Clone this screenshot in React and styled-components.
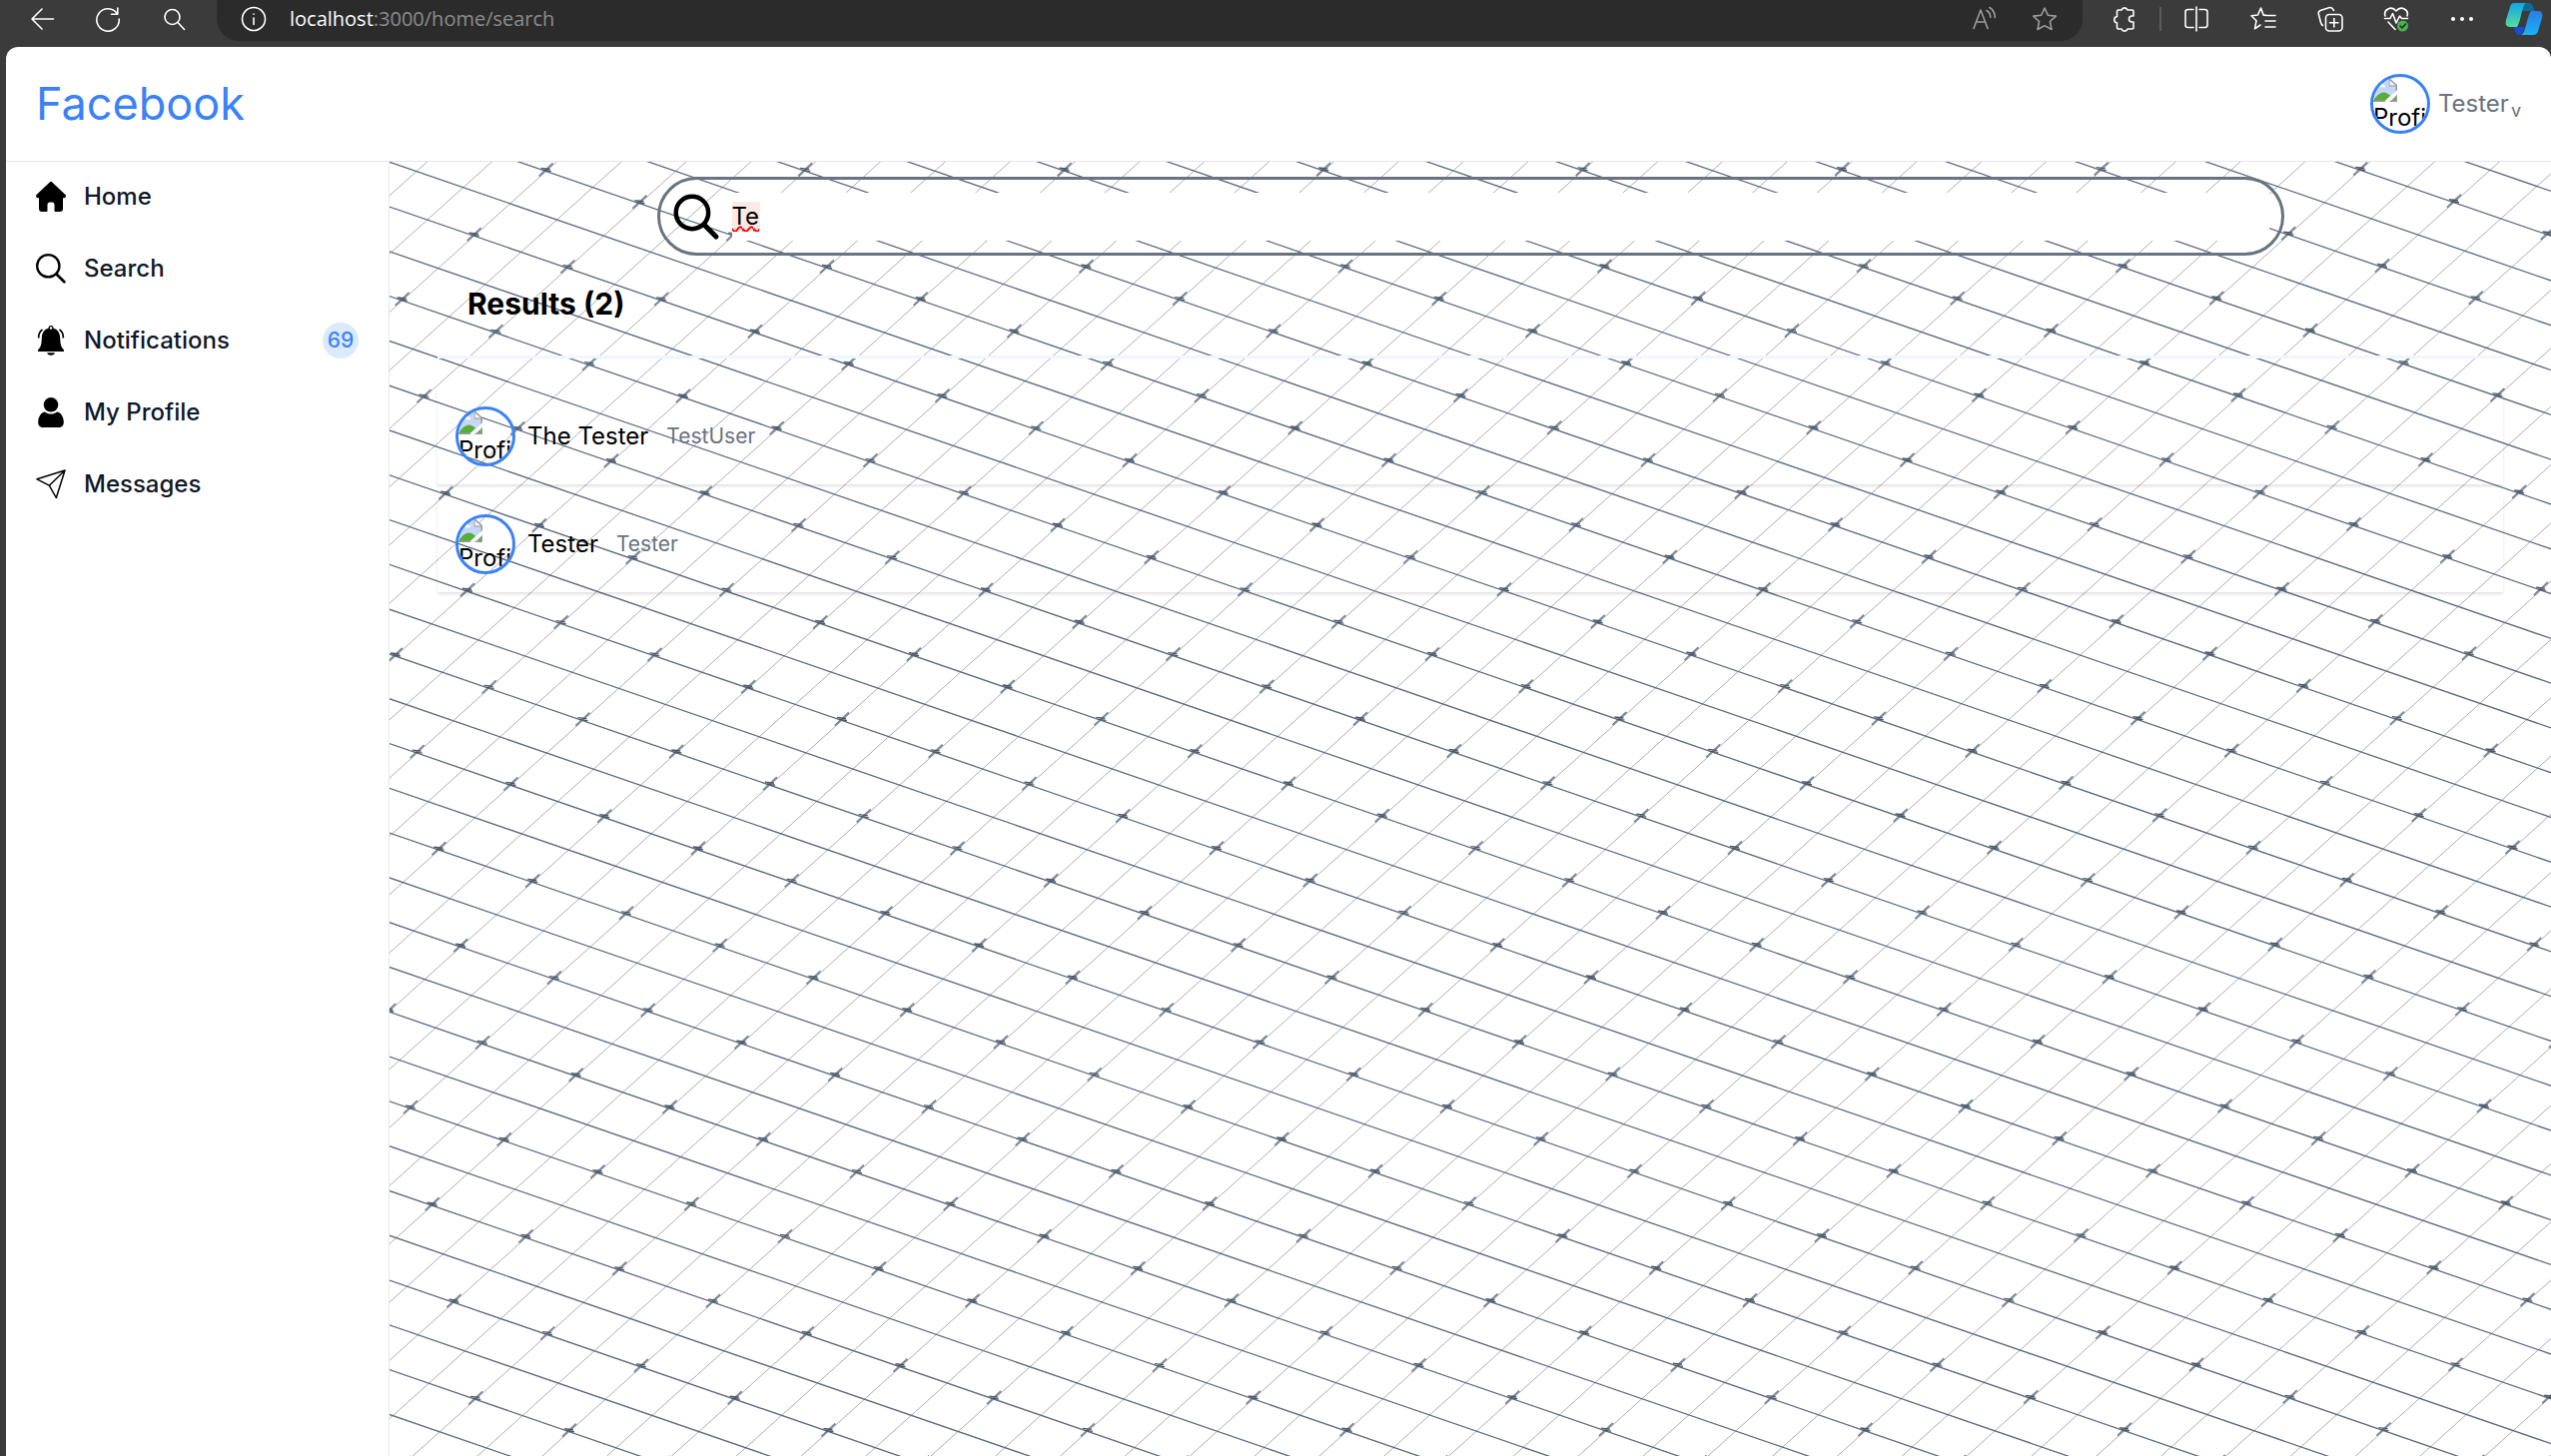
import React from 'react';
import styled, { createGlobalStyle } from 'styled-components';

const GlobalStyle = createGlobalStyle`
  *, *::before, *::after { box-sizing: border-box; }
  body { margin: 0; background: #3b3b3b; font-family: Inter, "Liberation Sans", sans-serif; color: #000; }
  button, input { font: inherit; color: inherit; }
  a { color: inherit; text-decoration: none; }
`;

const Window = styled.div`
  min-height: 100vh;
  display: flex;
  flex-direction: column;
`;

const BrowserBar = styled.div`
  height: 47px;
  display: flex;
  align-items: flex-start;
  padding: 0 0 0 24px;
  color: #fff;
`;

const ToolButton = styled.button`
  width: ${p => p.$width || 36}px;
  height: 38px;
  margin-right: ${p => p.$gap || 0}px;
  padding: 0;
  border: 0;
  background: none;
  color: ${p => (p.$dim ? '#9d9d9d' : '#fff')};
  display: flex;
  align-items: center;
  justify-content: center;
  flex: none;
`;

const AddressBar = styled.div`
  flex: 1;
  height: 41px;
  background: #2b2b2b;
  border-radius: 0 0 22px 22px;
  display: flex;
  align-items: flex-start;
  padding: 0 20px 0 19px;
  margin: 0 24px 0 0;
`;

const Url = styled.span`
  flex: 1;
  padding-left: 18px;
  font: 20px/38px "Open Sans", "Noto Sans", sans-serif;
  color: #8c8c8c;
  b { font-weight: 400; color: #fff; }
`;

const BarDivider = styled.span`
  width: 2px;
  height: 24px;
  margin: 7px 17px 0 17px;
  background: #5c5c5c;
`;

const Page = styled.div`
  flex: 1;
  margin-left: 6px;
  background: #fff;
  border-radius: 12px 12px 0 0;
  overflow: hidden;
  display: flex;
  flex-direction: column;
`;

const Header = styled.header`
  height: 115px;
  border-bottom: 1px solid #e5e7eb;
  display: flex;
  align-items: center;
  justify-content: space-between;
  padding: 0 30px;
`;

const Brand = styled.a`
  font-size: 45px;
  line-height: 48px;
  color: #3b82f6;
`;

const Account = styled.button`
  display: flex;
  align-items: center;
  gap: 8px;
  padding: 0;
  border: 0;
  background: none;
  font-size: 24px;
  line-height: 36px;
  color: #6b7280;
  sub { margin-left: 2px; font-size: 18px; line-height: 0; vertical-align: -5px; }
`;

const AvatarFrame = styled.span`
  width: 60px;
  height: 60px;
  flex: none;
  border: 3px solid #3b82f6;
  border-radius: 50%;
  overflow: hidden;
  display: block;
  color: #000;
  font-size: 24px;
  line-height: 30px;
  text-align: left;
  svg { display: block; margin-top: 2px; }
`;

const Body = styled.div`
  flex: 1;
  display: flex;
`;

const Sidebar = styled.nav`
  width: 384px;
  flex: none;
  border-right: 1px solid #e5e7eb;
  display: flex;
  flex-direction: column;
  gap: 2px;
`;

const NavLink = styled.a`
  height: 70px;
  padding: 0 30px;
  display: flex;
  align-items: center;
  gap: 18px;
  font-size: 24px;
  line-height: 36px;
  font-weight: 500;
  color: #111827;
  svg { color: #000; flex: none; }
`;

const Count = styled.span`
  width: 36px;
  height: 36px;
  margin-left: auto;
  border-radius: 50%;
  background: #dbeafe;
  color: #3b82f6;
  font-size: 21px;
  line-height: 36px;
  text-align: center;
`;

const Main = styled.main`
  flex: 1;
  min-width: 0;
  position: relative;
  overflow: hidden;
  padding: 15px 48px 0;
`;

const Backdrop = styled.svg`
  position: absolute;
  top: 0;
  left: 0;
  width: 100%;
  height: 100%;
`;

const Content = styled.div`
  position: relative;
`;

const SearchBox = styled.label`
  width: 1629px;
  max-width: 100%;
  height: 79px;
  margin: 0 auto;
  border: 3px solid #6b7280;
  border-radius: 40px;
  padding: 0 12px;
  display: flex;
  align-items: center;
  gap: 12px;
`;

const SearchField = styled.span`
  flex: 1;
  height: 48px;
  background: #fff;
  display: flex;
  align-items: center;
`;

const SearchInput = styled.input`
  width: 100%;
  height: 30px;
  padding: 0;
  border: 0;
  outline: 0;
  background: linear-gradient(#ffe9e5, #ffe9e5) 0 0 / 28px 100% no-repeat;
  font-size: 24px;
  line-height: 30px;
  text-decoration: underline wavy #f00 2px;
`;

const ResultsTitle = styled.h1`
  margin: 27px 30px 31px;
  font-size: 30px;
  line-height: 42px;
  font-weight: 700;
`;

const Rule = styled.hr`
  margin: 0;
  border: 0;
  height: 3px;
  background: #eff6ff;
`;

const ResultList = styled.ul`
  list-style: none;
  margin: 30px 0 0;
  padding: 0;
  display: grid;
  gap: 12px;
`;

const Result = styled.li`
  height: 96px;
  box-shadow: 0 2px 3px rgba(0, 0, 0, 0.12);
`;

const ResultLink = styled.a`
  height: 100%;
  padding: 0 18px;
  display: flex;
  align-items: center;
  gap: 12px;
  font-size: 24px;
  line-height: 36px;
`;

const Username = styled.span`
  margin-left: 6px;
  font-size: 21px;
  color: #6b7280;
`;

function BrokenImage() {
  return (
    <svg width="24" height="24" viewBox="0 0 16 16" aria-hidden="true">
      <path d="M0 0h10.500L16 4.500V15H0z" fill="#c5d8f8" />
      <path d="M1 5.500c.3-2 2-2.500 3-1.500 1.500-1.500 4-.5 4 1.500z" fill="#fff" />
      <path d="M0 14.500C3 9.500 6.500 8 9 9.500l2.500 1.700L7.500 15H0z" fill="#57ad38" />
      <path d="M12 15l3.500-4v4z" fill="#57ad38" />
      <path d="M0 14.800h16M15.500 15V4.300L11 .3v4.200h4.500" fill="none" stroke="#9a9a9a" />
      <path d="M11 1v3.300h4z" fill="#f4f4f4" />
      <path d="M8.500 15.700L16.500 8.500" stroke="#fff" strokeWidth="2.200" />
    </svg>
  );
}

function Avatar() {
  return <AvatarFrame><BrokenImage />Profi</AvatarFrame>;
}

/* Oblique lattice: shallow dark lines crossed by light steep ones, with a
   small knot at every other intersection. */
const SHALLOW = { x: 93.75, y: 32.31 };
const STEEP = { x: -72, y: 64.77 };
const ORIGIN = { x: 156.7, y: 9.5 };
const REACH = 60;

function at(i, j) {
  return [ORIGIN.x + i * SHALLOW.x + j * STEEP.x, ORIGIN.y + i * SHALLOW.y + j * STEEP.y];
}

function buildLattice() {
  let shallow = '';
  let steep = '';
  const knots = [];
  for (let k = -REACH; k <= REACH; k += 0.5) {
    shallow += `M${at(-REACH, k)}L${at(REACH, k)}`;
    steep += `M${at(k, -REACH)}L${at(k, REACH)}`;
  }
  for (let i = -REACH; i <= REACH; i += 1) {
    for (let j = -REACH; j <= REACH; j += 1) {
      const [x, y] = at(i, j);
      if (x > -20 && x < 4000 && y > -20 && y < 2400) knots.push([x, y]);
    }
  }
  return { shallow, steep, knots };
}

const lattice = buildLattice();

function Lattice() {
  return (
    <Backdrop aria-hidden="true">
      <path d={lattice.steep} stroke="#a9aeb8" strokeWidth="1" fill="none" />
      <path d={lattice.shallow} stroke="#5d697b" strokeWidth="1.3" fill="none" />
      <path
        d={lattice.knots.map(([x, y]) => `M${x - 7} ${y + 5}l14 -13`).join('')}
        stroke="#808997" strokeWidth="2" fill="none"
      />
      <path
        d={lattice.knots.map(([x, y]) => `M${x - 5} ${y - 3}l9 1M${x - 3} ${y - 1}l8 1`).join('')}
        stroke="#4b5768" strokeWidth="1.4" fill="none"
      />
    </Backdrop>
  );
}

const line = { fill: 'none', stroke: 'currentColor', strokeWidth: 1.6, strokeLinecap: 'round', strokeLinejoin: 'round' };

function Glyph({ size = 26, children, ...rest }) {
  return <svg width={size} height={size} viewBox="0 0 26 26" aria-hidden="true" {...line} {...rest}>{children}</svg>;
}

const SearchGlyph = ({ size, weight, inset = 0 }) => (
  <svg
    width={size} height={size} viewBox={`${-inset} ${-inset} ${30 + 2 * inset} ${30 + 2 * inset}`}
    fill="none" stroke="currentColor" strokeLinecap="round" aria-hidden="true"
  >
    <circle cx="12.300" cy="12.300" r={12.3 - weight / 2} strokeWidth={weight} />
    <path d="M20.500 20.500l7.800 7.800" strokeWidth={weight + 0.4} />
  </svg>
);

const navItems = [
  { label: 'Home', icon: <svg width="30" height="30" viewBox="0 0 30 30" aria-hidden="true"><path d="M13.500.7a2 2 0 0 1 3 0L29.500 13c1.200 1.500 0 3.300-1.700 3.300H27V27a3 3 0 0 1-3 3h-4.500a1 1 0 0 1-1-1v-6c0-1.500-1-2.500-2.500-2.500h-2c-1.500 0-2.500 1-2.500 2.500v6a1 1 0 0 1-1 1H6a3 3 0 0 1-3-3V16.300h-.800C.500 16.300-.700 14.500.500 13z" /></svg> },
  { label: 'Search', icon: <SearchGlyph size={30} weight={2.3} /> },
  { label: 'Notifications', count: 69, icon: <svg width="30" height="30" viewBox="0 0 30 30" aria-hidden="true"><path d="M15 2.500c6 0 9 4 9.200 10 .2 7 1.300 9.500 3.800 12v1.500H2v-1.500c2.500-2.500 3.600-5 3.800-12C6 6.500 9 2.500 15 2.500zM11 27.300h8c-.7 1.700-2 2.500-4 2.500s-3.300-.8-4-2.500z" /><circle cx="15" cy="2.500" r="1.900" fill="#fff" stroke="#000" strokeWidth="1.200" /><path d="M6.500 4C3.500 6 2.500 9 2.700 12.500M23.500 4c3 2 4 5 3.800 8.500" fill="none" stroke="#000" strokeWidth="1.600" /></svg> },
  { label: 'My Profile', icon: <svg width="30" height="30" viewBox="0 0 30 30" aria-hidden="true"><circle cx="15" cy="7.300" r="7.300" /><path d="M9 14.500c3.500 2.700 8.500 2.700 12 0 4 .5 6.800 5 6.800 10.500 0 3-2 5-5 5H7.200c-3 0-5-2-5-5 0-5.500 2.800-10 6.800-10.500z" /></svg> },
  { label: 'Messages', icon: <svg width="30" height="30" viewBox="0 0 30 30" fill="none" stroke="#000" strokeWidth="1.500" strokeLinejoin="round" aria-hidden="true"><path d="M29 1L1 9.800l12.300 6.400L20.300 28.500zM29 1L13.300 16.200" /></svg> },
];

const results = [
  { name: 'The Tester', username: 'TestUser' },
  { name: 'Tester', username: 'Tester' },
];

function BrowserChrome() {
  return (
    <BrowserBar>
      <ToolButton $gap={30} aria-label="Back"><Glyph><path d="M24.500 13H3M13 3L3 13l10 10" /></Glyph></ToolButton>
      <ToolButton $gap={30} aria-label="Refresh"><Glyph><path d="M22.500 8A11.200 11.200 0 1 0 24.200 13M22.800 2v6.200h-6.200" /></Glyph></ToolButton>
      <ToolButton $gap={25} aria-label="Search tabs"><Glyph><circle cx="11.500" cy="11" r="7.500" /><path d="M17 16.500l6.500 7" /></Glyph></ToolButton>
      <AddressBar>
        <ToolButton aria-label="Site information"><Glyph><circle cx="13" cy="13" r="11.500" /><path d="M13 12v6.500M13 8v.2" /></Glyph></ToolButton>
        <Url><b>localhost</b>:3000/home/search</Url>
        <ToolButton $dim $gap={24} aria-label="Read aloud"><Glyph><path d="M2 22.500L9 4l7 18.500M4.300 16h9.400M15 4.500a8 8 0 0 1 3.800 7M18 1.500a12 12 0 0 1 5.300 10" /></Glyph></ToolButton>
        <ToolButton $dim aria-label="Favorite"><Glyph><path d="M13 2l3.300 7.200 8 .9-5.900 5.400 1.600 8L13 19.600l-7 3.900 1.600-8L1.700 10.100l8-.9z" /></Glyph></ToolButton>
      </AddressBar>
      <ToolButton aria-label="Extensions"><Glyph><path d="M7 4h3a3.200 3.200 0 0 1 6 0h4.500Q22 4 22 5.500V10h-1.500a3 3 0 0 0 0 6H22v5.500q0 1.500-1.500 1.500H16a3.200 3.200 0 0 1-6 0H7q-1.500 0-1.500-1.500V17a3.300 3.300 0 0 1 0-6.500v-5Q5.500 4 7 4z" /></Glyph></ToolButton>
      <BarDivider />
      <ToolButton $gap={31} aria-label="Split screen"><Glyph><path d="M10 3.500H4.500q-2.500 0-2.500 2.500v13q0 2.500 2.500 2.500H10M16 3.500h5.500Q24 3.500 24 6v13q0 2.500-2.500 2.500H16M13 1v24" /></Glyph></ToolButton>
      <ToolButton $gap={31} aria-label="Favorites"><Glyph><path d="M17 9.500l-3.800-.4L10.500 2 7.500 9 1 9.800l5 5-1.500 8L10 19M17 9.500h8M15 15h10M15 21h10" /></Glyph></ToolButton>
      <ToolButton $gap={30} aria-label="Collections"><Glyph><rect x="8.500" y="8.500" width="16.500" height="16.500" rx="3.500" /><path d="M16.800 12.500v8.500M12.500 16.800H21M5.500 19.500Q4 18.500 3.500 16.500L1.200 7.500Q1 5.500 3 4.500l9.500-3Q15 1 16.500 4.500" /></Glyph></ToolButton>
      <ToolButton $gap={30} aria-label="Browser essentials"><Glyph><path d="M2 10C0 4 8-1 13 5c5-6 13-1 11 5M1.500 12.500H7l2.500-5L13 17l3.500-7 2 2.500h6M5 16l7 7.500" /><circle cx="19.500" cy="20" r="5.500" fill="#4caf50" stroke="none" /><path d="M17 20l2 2 3.500-4" stroke="#17351a" /></Glyph></ToolButton>
      <ToolButton $gap={17} aria-label="More"><Glyph><g fill="currentColor" stroke="none"><circle cx="4" cy="13" r="2" /><circle cx="13" cy="13" r="2" /><circle cx="22" cy="13" r="2" /></g></Glyph></ToolButton>
      <ToolButton $width={54} aria-label="Copilot">
        <svg width="38" height="34" viewBox="0 0 38 34" aria-hidden="true">
          <defs>
            <linearGradient id="copilotLeft" x1="0" y1="0" x2="0" y2="1"><stop offset="0" stopColor="#12a5e8" /><stop offset="1" stopColor="#58dc9a" /></linearGradient>
            <linearGradient id="copilotRight" x1="0" y1="0" x2="0" y2="1"><stop offset="0" stopColor="#2a7de0" /><stop offset="1" stopColor="#18b4fb" /></linearGradient>
          </defs>
          <path d="M15 1h9c4 0 4 6 6 8H17z" fill="#0b6d94" />
          <path d="M8 25h12l-4 8h-2c-4 0-4-6-6-8z" fill="#1d49d8" />
          <path d="M9 1h12c-4 1-5 19-9 24H5c-4 0-5-3-4-7L5 5q1-4 4-4z" fill="url(#copilotLeft)" />
          <path d="M26 9h7c4 0 5 3 4 7l-4 13q-1 4-5 4H16c5-1 6-20 10-24z" fill="url(#copilotRight)" />
        </svg>
      </ToolButton>
    </BrowserBar>
  );
}

export default function App() {
  return (
    <Window>
      <GlobalStyle />
      <BrowserChrome />
      <Page>
        <Header>
          <Brand href="#">Facebook</Brand>
          <Account><Avatar /><span>Tester<sub>v</sub></span></Account>
        </Header>
        <Body>
          <Sidebar>
            {navItems.map(item => (
              <NavLink href="#" key={item.label}>
                {item.icon}
                {item.label}
                {item.count && <Count>{item.count}</Count>}
              </NavLink>
            ))}
          </Sidebar>
          <Main>
            <Lattice />
            <Content>
              <SearchBox htmlFor="people-search">
                <SearchGlyph size={48} weight={3} inset={1} />
                <SearchField><SearchInput id="people-search" aria-label="Search people" defaultValue="Te" /></SearchField>
              </SearchBox>
              <ResultsTitle>Results (2)</ResultsTitle>
              <Rule />
              <ResultList>
                {results.map(r => (
                  <Result key={r.username}>
                    <ResultLink href="#">
                      <Avatar />
                      {r.name}
                      <Username>{r.username}</Username>
                    </ResultLink>
                  </Result>
                ))}
              </ResultList>
            </Content>
          </Main>
        </Body>
      </Page>
    </Window>
  );
}
